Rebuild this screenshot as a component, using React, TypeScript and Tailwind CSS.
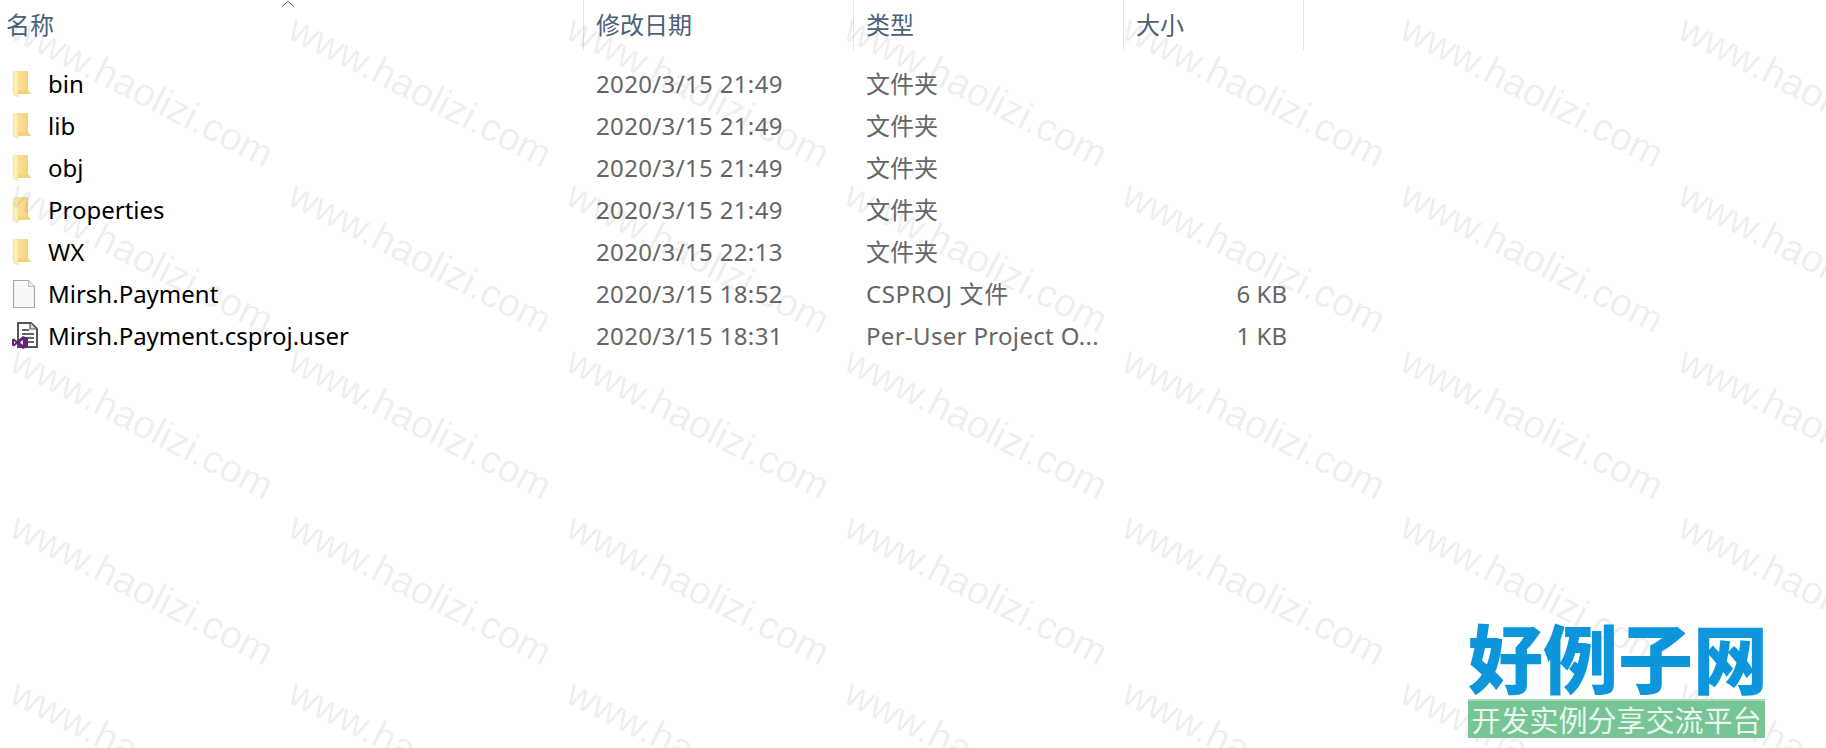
const FONT = "font-['Noto_Sans','Noto_Sans_CJK_SC',sans-serif]";

const rows = [
  { name: "bin", date: "2020/3/15 21:49", type: "文件夹", size: "", icon: "folder", tc: "" },
  { name: "lib", date: "2020/3/15 21:49", type: "文件夹", size: "", icon: "folder", tc: "" },
  { name: "obj", date: "2020/3/15 21:49", type: "文件夹", size: "", icon: "folder", tc: "" },
  { name: "Properties", date: "2020/3/15 21:49", type: "文件夹", size: "", icon: "folder", tc: "" },
  { name: "WX", date: "2020/3/15 22:13", type: "文件夹", size: "", icon: "folder", tc: "" },
  { name: "Mirsh.Payment", date: "2020/3/15 18:52", type: "CSPROJ 文件", size: "6 KB", icon: "file", tc: "tracking-[0.6px]" },
  { name: "Mirsh.Payment.csproj.user", date: "2020/3/15 18:31", type: "Per-User Project O...", size: "1 KB", icon: "vs", tc: "tracking-[0.33px]" },
];

function FolderIcon() {
  return (
    <svg width="20" height="28" viewBox="0 0 20 28">
      <defs>
        <linearGradient id="fg" x1="0" y1="0" x2="1" y2="0">
          <stop offset="0" stopColor="#fbe49c" />
          <stop offset="1" stopColor="#f3cd72" />
        </linearGradient>
      </defs>
      <path d="M5 1h11v20l3 3H5z" fill="url(#fg)" />
      <path d="M1 2l5-1v26l-5-3z" fill="#fdeeb8" stroke="#ecd48c" strokeWidth="0.5" />
      <path d="M6 20h10l3 4H6z" fill="#f6d27a" />
    </svg>
  );
}

function FileIcon() {
  return (
    <svg width="24" height="30" viewBox="0 0 24 30">
      <path d="M1.500 1.500h15l6 6v21h-21z" fill="#f8f8f8" stroke="#a8a8a8" strokeWidth="1.2" />
      <path d="M16.500 1.500v6h6" fill="#ececec" stroke="#bdbdbd" strokeWidth="1" />
    </svg>
  );
}

function VsIcon() {
  return (
    <svg width="26" height="30" viewBox="0 0 26 30">
      <path d="M6 2h13l6 6v18H6z" fill="#fff" stroke="#555" strokeWidth="2" />
      <path d="M18 2v6h6" fill="#ddd" stroke="#555" strokeWidth="1.2" />
      <path d="M10 9h7M10 13h12M10 17h12M13 21h9" stroke="#666" strokeWidth="1.8" />
      <path
        d="M11 15l5 2v9l-5 2-6-5-3 2.500-2-1v-6l2-1 3 2.500zM11 19l-3 2.500 3 2.500zM2 20v3l1.500-1.500z"
        fill="#68217a"
        fillRule="evenodd"
      />
    </svg>
  );
}

function Icon({ kind }: { kind: string }) {
  if (kind === "folder") return <FolderIcon />;
  if (kind === "file") return <FileIcon />;
  return <VsIcon />;
}

function Watermark() {
  const cells = Array.from({ length: 5 * 7 });
  return (
    <div className="absolute inset-0 overflow-hidden pointer-events-none">
      <div className="grid grid-cols-[repeat(7,278px)] auto-rows-[166px] -mt-[60px]">
        {cells.map((_, i) => (
          <div key={i} className="relative h-[166px] w-[278px]">
            <span className="absolute left-[14px] top-[66px] origin-left rotate-[27deg] whitespace-nowrap text-[39px] leading-none font-['Liberation_Sans',sans-serif] text-[#00000012]">
              www.haolizi.com
            </span>
          </div>
        ))}
      </div>
    </div>
  );
}

function Logo() {
  return (
    <div className="absolute left-[1468px] top-[612px] w-[297px] flex flex-col items-stretch font-['Noto_Sans_CJK_SC',sans-serif]">
      <div className="h-[87px] text-[75px] leading-[87px] font-black text-[#0e96dc] whitespace-nowrap">好例子网</div>
      <div className="h-[39px] bg-[#77c497] border-t-2 border-[#a9dcbd] text-[29px] leading-[37px] text-[#e9f6ee] whitespace-nowrap text-center">开发实例分享交流平台</div>
    </div>
  );
}

export default function App() {
  return (
    <div className={`relative w-[1826px] h-[748px] overflow-hidden bg-white ${FONT}`}>
      <div className="grid grid-cols-[584px_270px_270px_180px] w-[1304px] h-[50px] text-[24px] leading-[50px] text-[#4c607a]">
        <div className="relative border-r border-[#e5e5e5] pl-[6px]">
          名称
          <svg className="absolute left-[281px] top-0" width="14" height="8" viewBox="0 0 14 8">
            <path d="M1 7l6-6 6 6" fill="none" stroke="#666" strokeWidth="1" />
          </svg>
        </div>
        <div className="border-r border-[#e5e5e5] pl-[12px]">修改日期</div>
        <div className="border-r border-[#e5e5e5] pl-[12px]">类型</div>
        <div className="border-r border-[#e5e5e5] pl-[12px]">大小</div>
      </div>
      <div className="pt-[13px] flex flex-col">
        {rows.map((r) => (
          <div key={r.name} className="grid grid-cols-[584px_270px_270px_180px] w-[1304px] h-[42px] items-center text-[24px] leading-[42px] text-[#666666]">
            <div className="flex items-center text-black">
              <div className="w-[48px] pl-[12px] flex items-center">
                <Icon kind={r.icon} />
              </div>
              <span>{r.name}</span>
            </div>
            <div className="pl-[12px] tracking-[0.35px]">{r.date}</div>
            <div className={`pl-[12px] whitespace-nowrap ${r.tc}`}>{r.type}</div>
            <div className="text-right pr-[17px]">{r.size}</div>
          </div>
        ))}
      </div>
      <Watermark />
      <Logo />
    </div>
  );
}
